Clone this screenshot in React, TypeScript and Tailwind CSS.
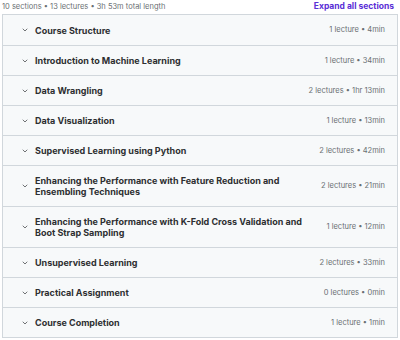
import { ChevronDown } from 'lucide-react';

const sections = [
  { title: 'Course Structure', meta: '1 lecture • 4min' },
  { title: 'Introduction to Machine Learning', meta: '1 lecture • 34min' },
  { title: 'Data Wrangling', meta: '2 lectures • 1hr 13min' },
  { title: 'Data Visualization', meta: '1 lecture • 13min' },
  { title: 'Supervised Learning using Python', meta: '2 lectures • 42min' },
  { title: 'Enhancing the Performance with Feature Reduction and Ensembling Techniques', meta: '2 lectures • 21min' },
  { title: 'Enhancing the Performance with K-Fold Cross Validation and Boot Strap Sampling', meta: '1 lecture • 12min' },
  { title: 'Unsupervised Learning', meta: '2 lectures • 33min' },
  { title: 'Practical Assignment', meta: '0 lectures • 0min' },
  { title: 'Course Completion', meta: '1 lecture • 1min' },
];

export default function App() {
  return (
    <div className="w-[400px] h-[340px] bg-white px-[2px] font-['Inter',sans-serif] text-[#2d2f31]">
      <div className="flex items-center justify-between h-[14px] pr-[4px] pb-[1px]">
        <span className="text-[7.5px] text-[#6a6f73]">10 sections • 13 lectures • 3h 53m total length</span>
        <span className="text-[8.5px] font-bold text-[#5a2fd6]">Expand all sections</span>
      </div>
      <div className="border border-[#d1d7dc] bg-[#f7f9fa]">
        {sections.map((s, i) => (
          <div
            key={s.title}
            className={`flex items-center pl-[18px] pr-[12px] ${i > 0 ? 'border-t border-[#d1d7dc]' : ''} ${
              s.title.length > 40 ? 'h-[41px]' : 'h-[30px]'
            }`}
          >
            <ChevronDown size={8} strokeWidth={2.2} className="shrink-0 text-[#3e4143]" />
            <div className="ml-[6px] w-[268px] text-[9px] font-bold leading-[11px]">{s.title}</div>
            <div className="ml-auto text-[7.5px] text-[#6a6f73]">{s.meta}</div>
          </div>
        ))}
      </div>
    </div>
  );
}
